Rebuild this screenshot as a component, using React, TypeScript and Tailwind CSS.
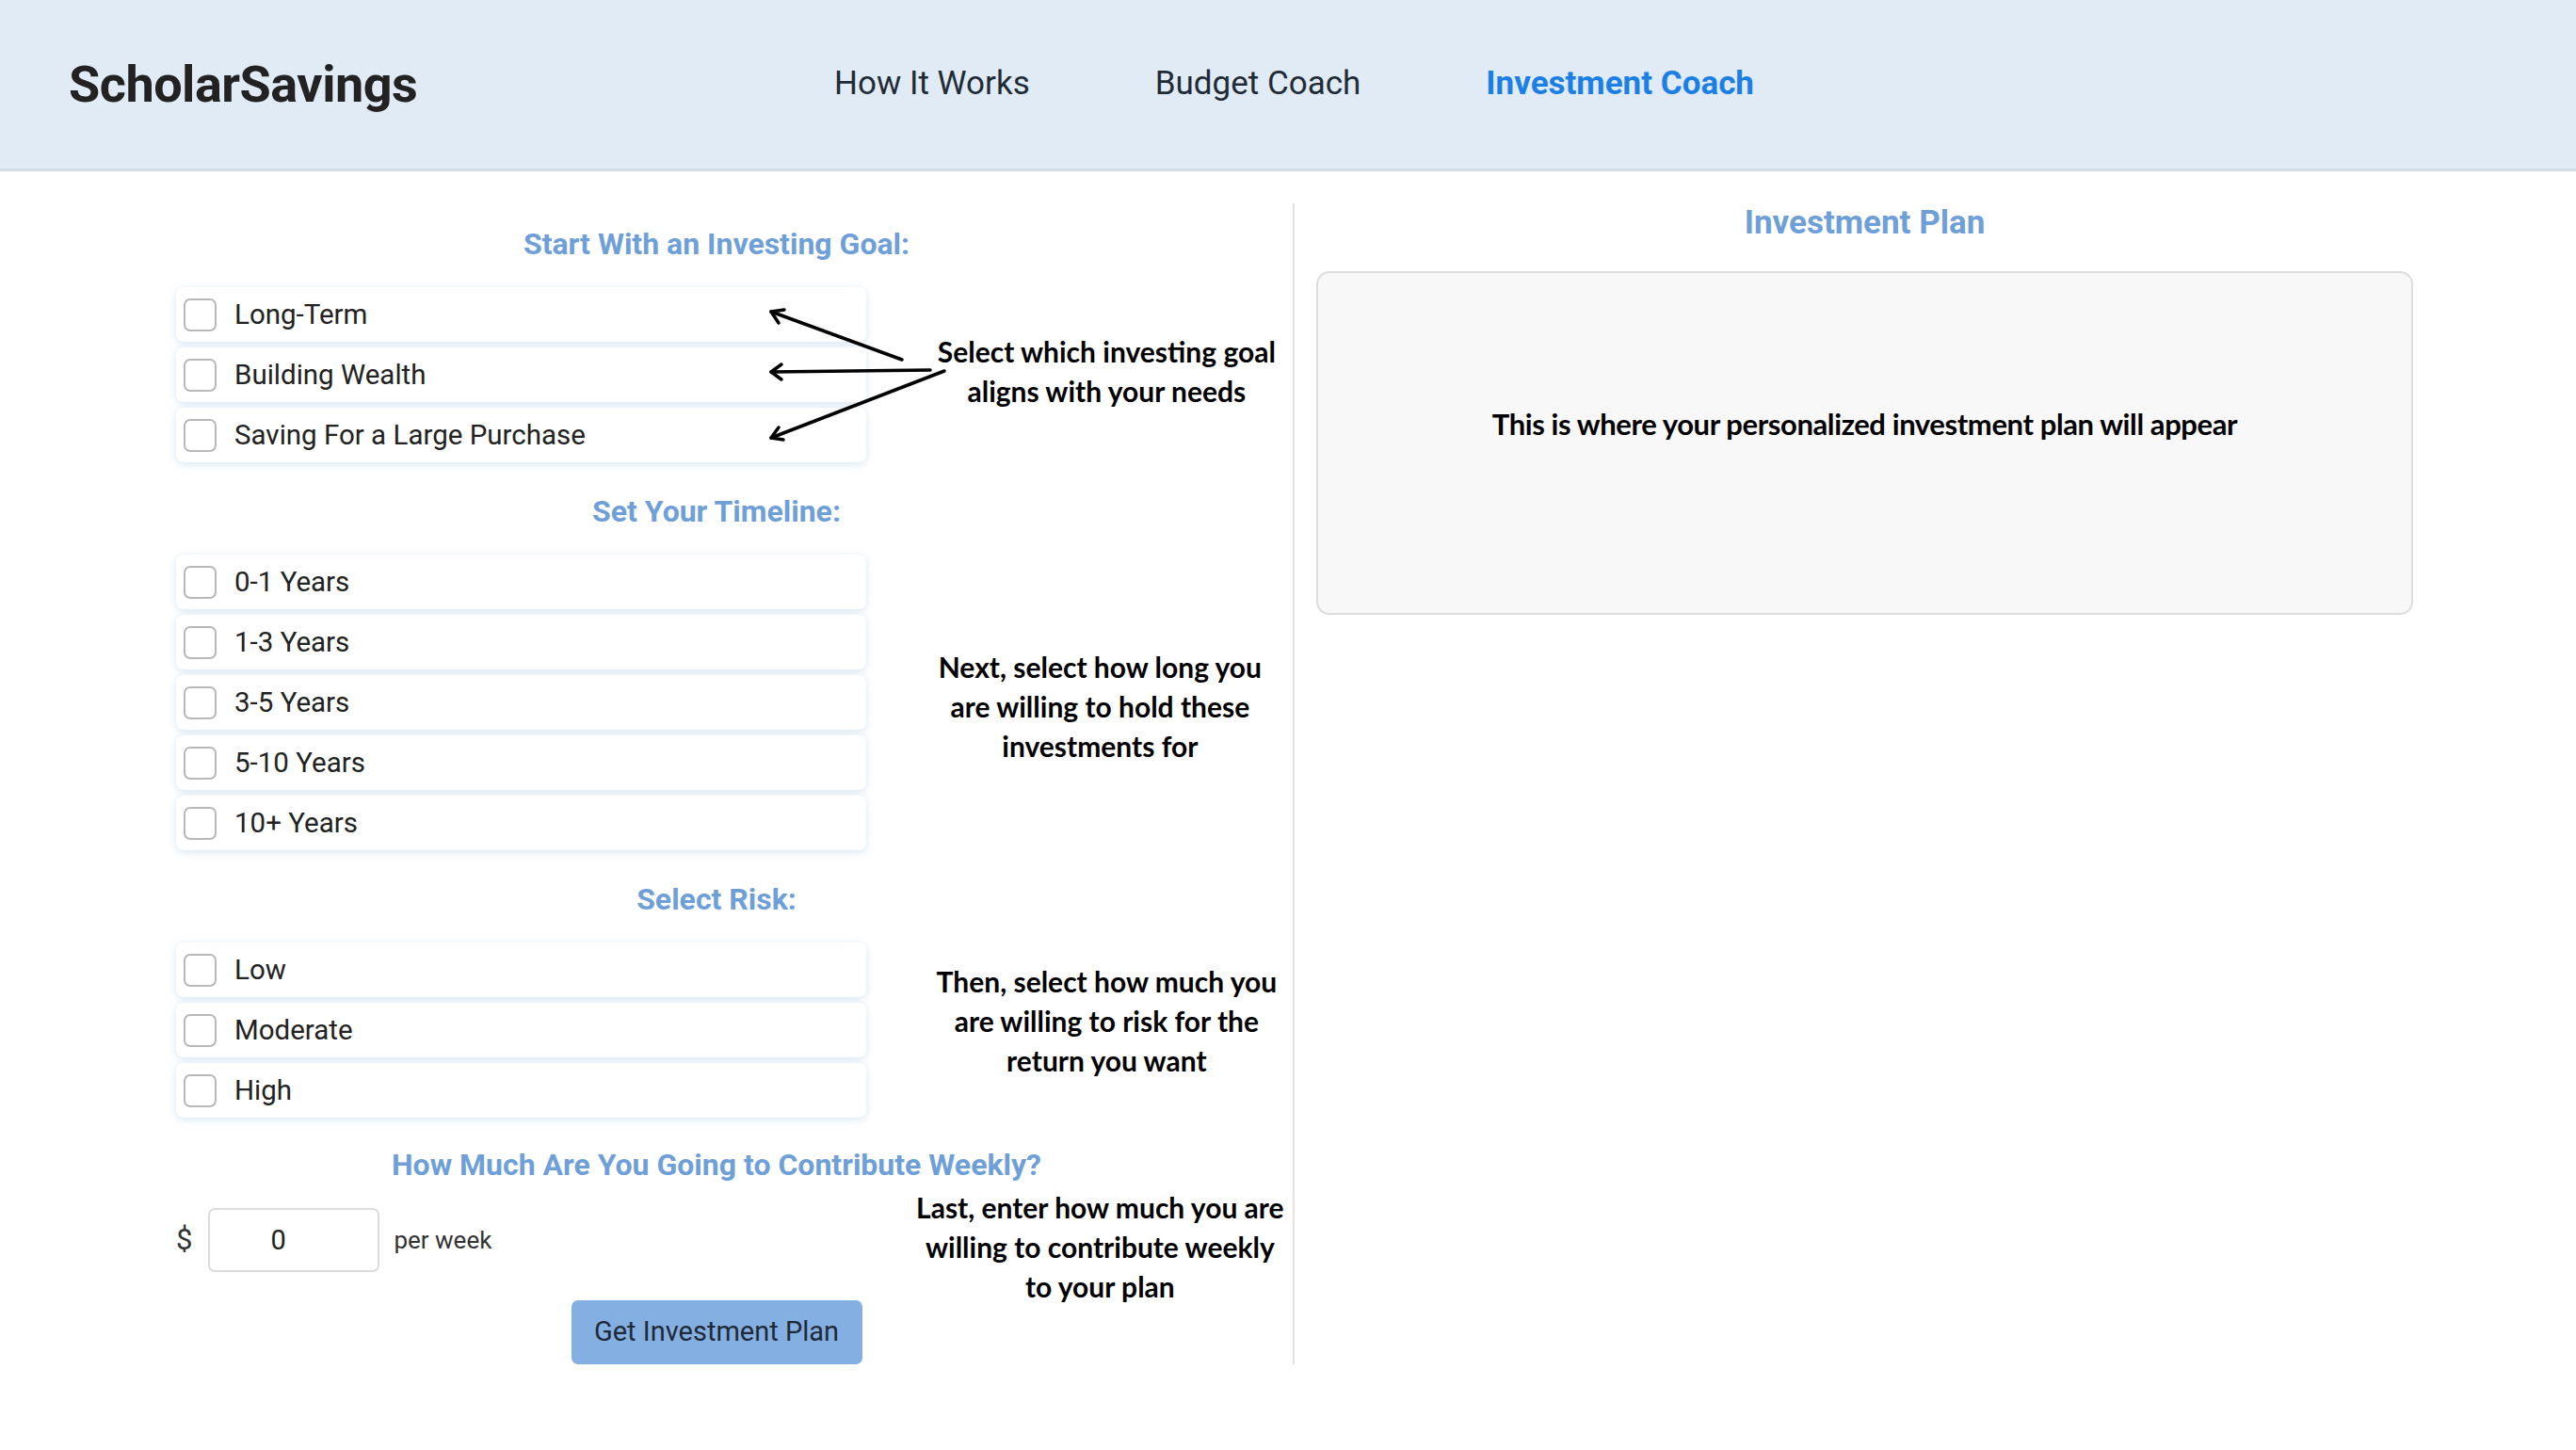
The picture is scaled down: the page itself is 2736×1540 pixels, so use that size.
import React from "react";

const roboto = { fontFamily: "Roboto, 'Liberation Sans', sans-serif" };

function Row({ label }: { label: string }) {
  return (
    <div className="flex h-[58px] items-center rounded-[8px] bg-white pl-[8px] shadow-[0_2px_9px_rgba(110,165,210,0.28)]">
      <input
        type="checkbox"
        readOnly
        className="h-[35px] w-[35px] shrink-0 appearance-none rounded-[7px] border-2 border-[#b8b8b8] bg-white"
      />
      <span className="ml-[19px] text-[29.5px] text-[#222]">{label}</span>
    </div>
  );
}

function Heading({ children, first, top }: { children: React.ReactNode; first?: boolean; top?: string }) {
  return (
    <h2
      className={`w-[1148px] text-center text-[32px] leading-[36px] font-bold text-[#6e9fd9] ${
        first ? "" : top ?? "mt-[34px]"
      } mb-[28px]`}
    >
      {children}
    </h2>
  );
}

function Note({ children, className }: { children: React.ReactNode; className?: string }) {
  return (
    <div
      className={`ml-[44px] flex w-[410px] items-center justify-center text-center text-[30px] leading-[42px] font-bold text-black ${className ?? ""}`}
      style={{ fontFamily: "Lato, 'Noto Sans', sans-serif" }}
    >
      <p>{children}</p>
    </div>
  );
}

export default function App() {
  return (
    <div className="min-h-[1540px] w-[2736px] bg-white" style={roboto}>
      <header className="flex h-[182px] items-center border-b-[3px] border-[#d4dce5] bg-[#e1ebf5] pl-[73px]">
        <div className="w-[813px] text-[54px] font-bold tracking-[-0.5px] text-[#222]">ScholarSavings</div>
        <nav className="flex gap-[133px] text-[35px] text-[#1f2b36]">
          <span>How It Works</span>
          <span>Budget Coach</span>
          <span className="font-bold text-[#1b7fe6]">Investment Coach</span>
        </nav>
      </header>

      <main className="flex items-start">
        <section className="mt-[34px] w-[1375px] border-r-2 border-[#e2e2e2] pl-[187px] pt-[25px]">
          <Heading first>Start With an Investing Goal:</Heading>
          <div className="flex items-stretch">
            <div className="relative flex w-[734px] flex-col gap-[6px]">
              <Row label="Long-Term" />
              <Row label="Building Wealth" />
              <Row label="Saving For a Large Purchase" />
              <svg
                className="pointer-events-none absolute left-0 top-0"
                width="900"
                height="200"
                viewBox="0 0 900 200"
                fill="none"
                stroke="#000"
                strokeWidth="3.5"
                strokeLinecap="round"
                strokeLinejoin="round"
              >
                <path d="M771 77 L632 26" />
                <path d="M646 24 L632 26 L640 38" />
                <path d="M801 88 L632 90" />
                <path d="M643 82 L632 90 L643 98" />
                <path d="M816 89 L632 160" />
                <path d="M640 149 L632 160 L645 162" />
              </svg>
            </div>
            <Note className="pb-[8px] pl-[14px]">
              Select which investing goal
              <br />
              aligns with your needs
            </Note>
          </div>

          <Heading>Set Your Timeline:</Heading>
          <div className="flex items-stretch">
            <div className="flex w-[734px] flex-col gap-[6px]">
              <Row label="0-1 Years" />
              <Row label="1-3 Years" />
              <Row label="3-5 Years" />
              <Row label="5-10 Years" />
              <Row label="10+ Years" />
            </div>
            <Note className="pt-[8px]">
              Next, select how long you
              <br />
              are willing to hold these
              <br />
              investments for
            </Note>
          </div>

          <Heading>Select Risk:</Heading>
          <div className="flex items-stretch">
            <div className="flex w-[734px] flex-col gap-[6px]">
              <Row label="Low" />
              <Row label="Moderate" />
              <Row label="High" />
            </div>
            <Note className="pb-[20px] pl-[14px]">
              Then, select how much you
              <br />
              are willing to risk for the
              <br />
              return you want
            </Note>
          </div>

          <Heading top="mt-[32px]">How Much Are You Going to Contribute Weekly?</Heading>
          <div className="flex items-start">
            <div className="flex h-[68px] w-[734px] items-center">
              <span className="text-[31px] text-[#333]">$</span>
              <input
                readOnly
                value="0"
                className="ml-[17px] h-[68px] w-[182px] rounded-[7px] border-2 border-[#dcdcdc] bg-white pl-[64px] text-left text-[29px] text-[#222] outline-none"
              />
              <span className="ml-[15px] text-[26px] text-[#333]">per week</span>
            </div>
            <Note className="-mb-[36px] -mt-[22px] h-[126px]">
              Last, enter how much you are
              <br />
              willing to contribute weekly
              <br />
              to your plan
            </Note>
          </div>

          <div className="mt-[30px] flex w-[1148px] justify-center">
            <button className="h-[68px] w-[309px] rounded-[7px] bg-[#84afe2] text-[29px] text-[#1e2a36]">
              Get Investment Plan
            </button>
          </div>
        </section>

        <section className="mt-[34px] flex w-[1211px] flex-col items-center px-[23px]">
          <h2 className="text-[35px] leading-[42px] font-bold text-[#6e9fd9]">Investment Plan</h2>
          <div className="mt-[30px] flex h-[365px] w-[1165px] items-center justify-center rounded-[14px] border-2 border-[#dddddd] bg-[#f8f8f8] pb-[40px]">
            <p
              className="text-[31px] font-bold tracking-[-0.4px] text-black"
              style={{ fontFamily: "Lato, 'Noto Sans', sans-serif" }}
            >
              This is where your personalized investment plan will appear
            </p>
          </div>
        </section>
      </main>
    </div>
  );
}
